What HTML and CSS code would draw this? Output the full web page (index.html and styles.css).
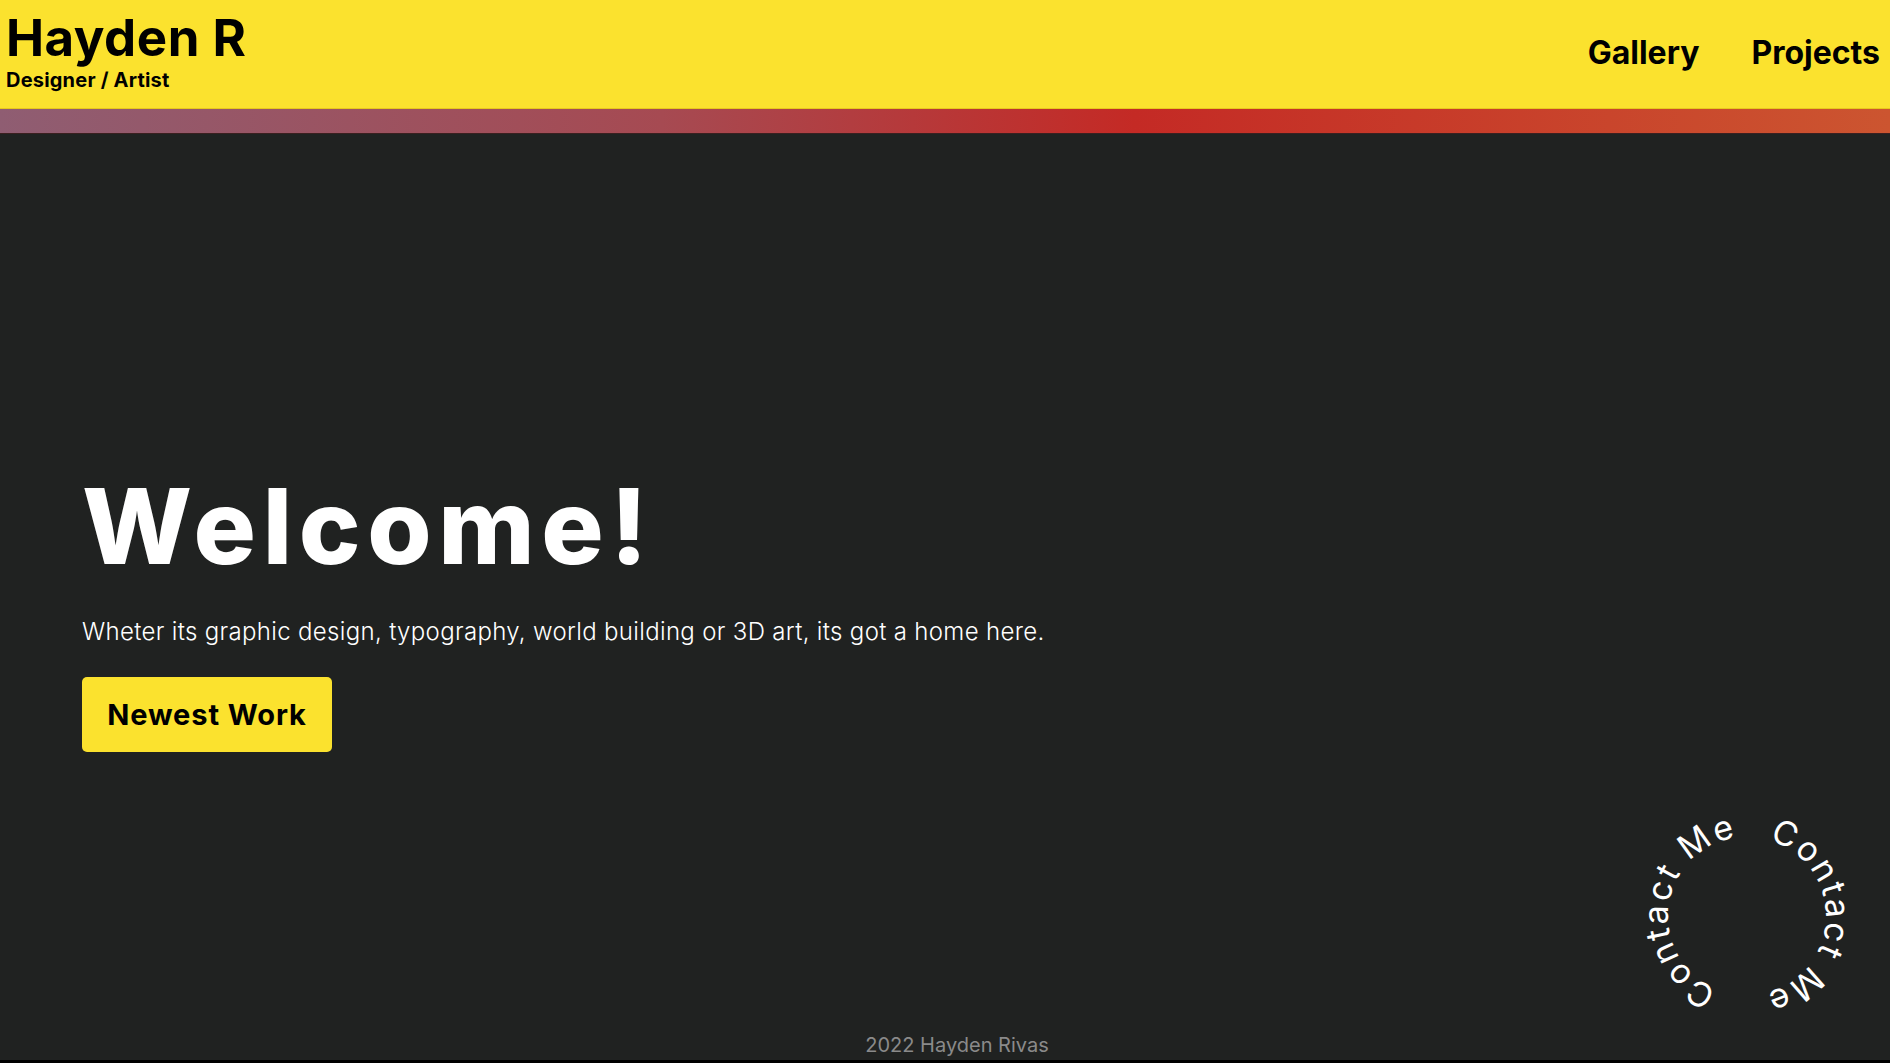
FILE: index.html
```html
<!DOCTYPE html>
<html lang="en">
<head>
<meta charset="utf-8">
<title>Hayden R</title>
<link rel="stylesheet" href="styles.css">
</head>
<body>
<header class="topbar">
  <div class="brand">
    <div class="brand-name">Hayden R</div>
    <div class="brand-role">Designer / Artist</div>
  </div>
  <nav class="nav">
    <a class="nav-link" href="#">Gallery</a>
    <a class="nav-link" href="#">Projects</a>
  </nav>
</header>
<div class="stripe"></div>
<main class="hero">
  <h1 class="hero-title">Welcome!</h1>
  <p class="hero-text">Wheter its graphic design, typography, world building or 3D art, its got a home here.</p>
  <a class="hero-button" href="#">Newest Work</a>
</main>
<footer class="footer">2022 Hayden Rivas</footer>
<a class="contact" href="#" aria-label="Contact Me">
  <svg class="contact-ring" width="240" height="240" viewBox="0 0 240 240">
    <defs>
      <path id="ring" d="M120,41 A79,79 0 1 1 120,199 A79,79 0 1 1 120,41"/>
    </defs>
    <text class="contact-text"><textPath href="#ring" startOffset="22" textLength="206" lengthAdjust="spacing">Contact Me</textPath></text>
    <text class="contact-text"><textPath href="#ring" startOffset="278" textLength="206" lengthAdjust="spacing">Contact Me</textPath></text>
  </svg>
</a>
</body>
</html>
```
FILE: styles.css
```css
* { box-sizing: border-box; }
html, body { margin: 0; padding: 0; }
body {
  background: #202221;
  font-family: "Inter", "Open Sans", sans-serif;
  color: #ffffff;
  height: 1063px;
  display: flex;
  flex-direction: column;
  position: relative;
  overflow: hidden;
  border-bottom: 3px solid #000;
}
.topbar {
  background: #fbe22e;
  height: 109px;
  display: flex;
  justify-content: space-between;
  align-items: flex-start;
  padding: 0 10px 0 6px;
  border-bottom: 1px solid #e7c81c;
}
.brand { padding-top: 12px; color: #000; }
.brand-name {
  font-size: 51px;
  font-weight: 700;
  line-height: 1;
  letter-spacing: 0.5px;
}
.brand-role {
  font-size: 20px;
  font-weight: 700;
  line-height: 1;
  margin-top: 7px;
  letter-spacing: 0.2px;
}
.nav { display: flex; gap: 52px; padding-top: 37px; }
.nav-link {
  color: #000;
  text-decoration: none;
  font-size: 32px;
  font-weight: 700;
  line-height: 1;
}
.stripe {
  height: 25px;
  background: linear-gradient(90deg, #8f5d72 0%, #a64a52 35%, #c42a25 60%, #cc5530 100%);
  border-bottom: 1px solid #3a2020;
}
.hero {
  flex: 1;
  padding: 340px 0 0 82px;
}
.hero-title {
  margin: 0;
  font-size: 104px;
  font-weight: 800;
  line-height: 1;
  letter-spacing: 6.6px;
}
.hero-text {
  margin: 40px 0 0;
  font-size: 24px;
  font-weight: 300;
  line-height: 1.2;
  letter-spacing: 0.33px;
}
.hero-button {
  display: inline-block;
  margin-top: 30px;
  width: 250px;
  height: 75px;
  line-height: 75px;
  text-align: center;
  background: #fbe22e;
  color: #000;
  border-radius: 5px;
  font-size: 29px;
  font-weight: 700;
  letter-spacing: 0.9px;
  text-decoration: none;
}
.footer {
  text-align: center;
  padding: 0 0 3px 24px;
  font-size: 20px;
  color: #8a8a8a;
  line-height: 1.2;
}
.contact {
  position: absolute;
  left: 1627px;
  top: 796px;
  width: 240px;
  height: 240px;
}
.contact-ring { display: block; }
.contact-text {
  fill: #ffffff;
  font-size: 34px;
  font-family: "Inter", sans-serif;
}
```
